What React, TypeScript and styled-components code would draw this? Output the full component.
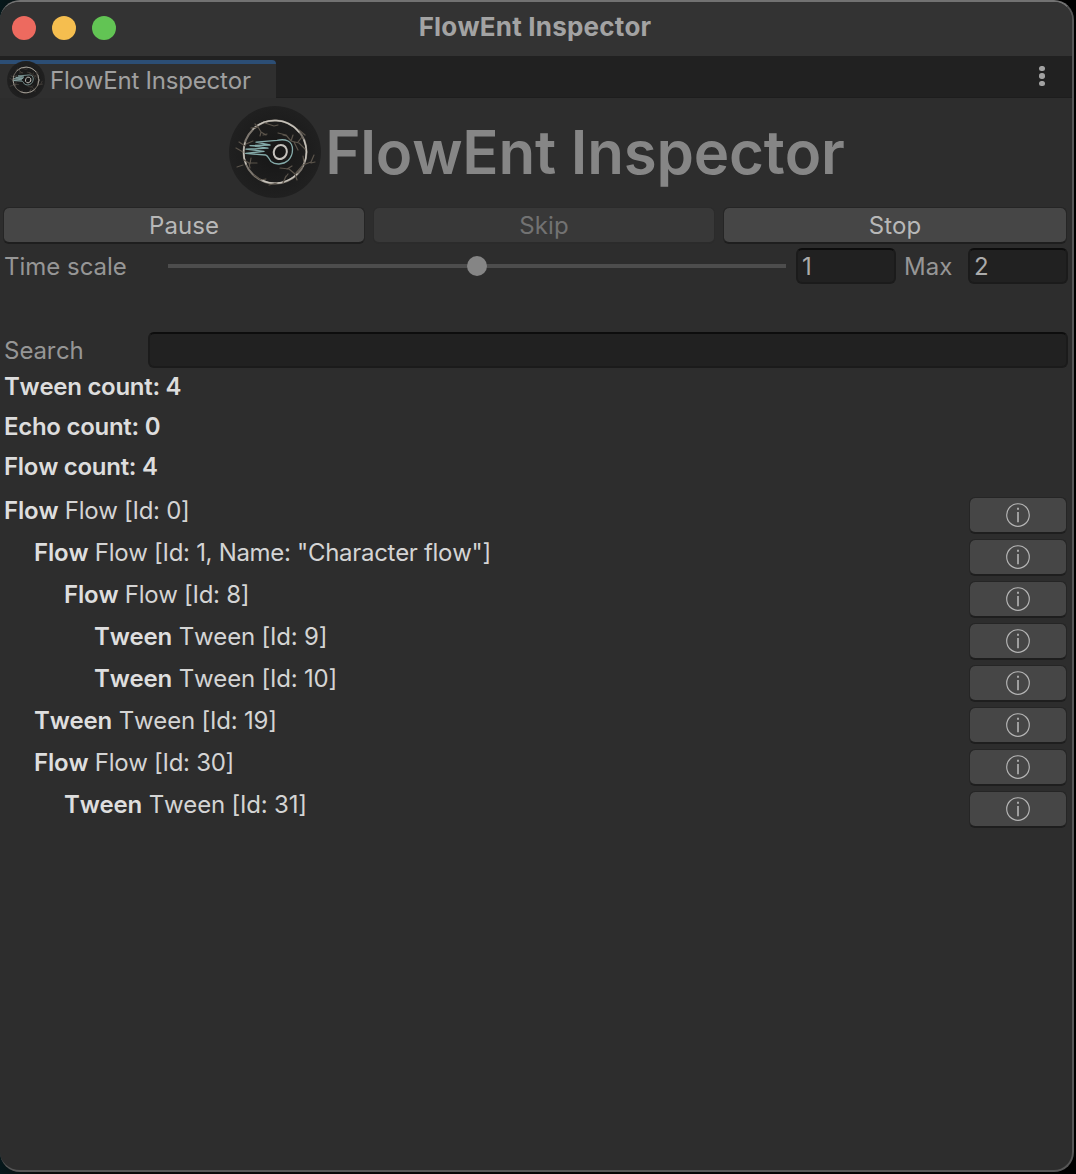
import React, { useState } from "react";
import styled, { createGlobalStyle } from "styled-components";

const GlobalStyle = createGlobalStyle`
  * { box-sizing: border-box; }
  body {
    margin: 0;
    background: #0b0c0c;
    font-family: Inter, "Liberation Sans", sans-serif;
    font-size: 24px;
    font-kerning: none;
    color: #9c9c9c;
    overflow: hidden;
  }
`;

const Desktop = styled.div`
  width: 1076px;
  height: 1174px;
  background: linear-gradient(90deg, #06181b 0, #0b0b0b 40px, #000 1070px);
`;

const Window = styled.main`
  width: 1074px;
  height: 1172px;
  display: flex;
  flex-direction: column;
  background: #2d2d2d;
  border: 2px solid #565656;
  border-top-color: #727272;
  border-left: 0;
  border-radius: 20px;
  overflow: hidden;
`;

const TitleBar = styled.header`
  flex: 0 0 54px;
  display: grid;
  grid-template-columns: 1fr auto 1fr;
  align-items: center;
  padding: 0 14px 4px 12px;
  background: #333333;
`;

const Lights = styled.div`
  display: flex;
  gap: 16px;
  padding-top: 2px;
`;

const Light = styled.span<{ $color: string }>`
  width: 24px;
  height: 24px;
  border-radius: 50%;
  background: ${(p) => p.$color};
`;

const WindowTitle = styled.div`
  font-size: 26px;
  font-weight: 700;
  line-height: 50px;
  letter-spacing: 0.2px;
  color: #a3a3a3;
`;

const TabBar = styled.nav`
  flex: 0 0 42px;
  display: flex;
  justify-content: space-between;
  padding-top: 4px;
  background: #212121;
  box-shadow: inset 0 -1px #1d1d1d;
`;

const Tab = styled.div`
  width: 276px;
  height: 38px;
  display: flex;
  align-items: center;
  gap: 5px;
  padding-left: 7px;
  background: #2f2f2f;
  border-top: 4px solid #2c4e75;
  border-top-right-radius: 4px;
`;

const TabLogo = styled.span`
  display: flex;
  margin-top: -3px;
`;

const TabLabel = styled.span`
  line-height: 32px;
  letter-spacing: -0.2px;
  white-space: nowrap;
  color: #a0a0a0;
`;

const MenuButton = styled.button`
  width: 24px;
  margin-right: 18px;
  padding: 1px 0 7px;
  display: flex;
  flex-direction: column;
  align-items: center;
  justify-content: center;
  gap: 2.1px;
  background: none;
  border: 0;
`;

const Dot = styled.i`
  width: 5.4px;
  height: 5.4px;
  border-radius: 50%;
  background: #a2a2a2;
`;

const Hero = styled.section`
  flex: 0 0 109px;
  display: flex;
  justify-content: center;
  align-items: center;
  gap: 4px;
  padding: 0 0 2px 2px;
`;

const HeroTitle = styled.h1`
  margin: 0;
  font-size: 60px;
  font-weight: 600;
  line-height: 104px;
  letter-spacing: -0.2px;
  color: #868686;
`;

const Controls = styled.div`
  display: grid;
  grid-template-columns: 362px 342px 344px;
  gap: 8px;
  padding-left: 3px;
`;

const Button = styled.button`
  height: 37px;
  padding: 0;
  display: flex;
  align-items: center;
  justify-content: center;
  font: inherit;
  font-kerning: none;
  letter-spacing: 0.05px;
  color: #b8b8b8;
  background: #464646;
  background-clip: padding-box;
  border: 1.5px solid #252525;
  border-bottom: 2px solid #1e1e1e;
  border-radius: 6px;
  &:disabled {
    color: #727272;
    background: #383838;
    border-color: #2b2b2b;
  }
`;

const InfoButton = styled(Button)`
  width: 98px;
`;

const Row = styled.div<{ $top: number }>`
  height: 36px;
  display: flex;
  align-items: center;
  margin-top: ${(p) => p.$top}px;
  padding: 0 4px;
`;

const FieldLabel = styled.label<{ $width: number; $indent?: number }>`
  width: ${(p) => p.$width}px;
  padding: 2px 0 0 ${(p) => p.$indent ?? 0}px;
  flex: none;
  line-height: 36px;
  letter-spacing: 0;
  color: #969696;
`;

const Field = styled.input<{ $width: number }>`
  width: ${(p) => p.$width}px;
  height: 36px;
  padding: 0 5px 0 4px;
  font: inherit;
  color: #ababab;
  background: #212121;
  border: 2px solid #1b1b1b;
  border-top-color: #0d0d0d;
  border-radius: 6px;
  outline: none;
`;

const Slider = styled.input`
  appearance: none;
  width: 618px;
  height: 20px;
  margin: 0 10px 0 0;
  background: linear-gradient(#4d4d4d, #4d4d4d) center / 100% 4px no-repeat;
  &::-webkit-slider-thumb {
    appearance: none;
    width: 20px;
    height: 20px;
    border-radius: 50%;
    background: #858585;
  }
`;

const Counts = styled.section`
  padding: 0 4px;
  margin-top: -1px;
  margin-bottom: 10px;
`;

const Count = styled.div`
  font-weight: 600;
  line-height: 40px;
  letter-spacing: -0.28px;
  color: #dddddd;
`;

const Tree = styled.ul`
  margin: 0;
  padding: 0 5px 0 4px;
  list-style: none;
`;

const Node = styled.li<{ $depth: number }>`
  height: 42px;
  display: flex;
  justify-content: space-between;
  align-items: flex-start;
  padding-left: ${(p) => p.$depth * 30}px;
`;

const NodeText = styled.span<{ $spacing: number }>`
  line-height: 28px;
  letter-spacing: ${(p) => p.$spacing}px;
  color: #d4d4d4;
  white-space: pre;
`;

const Kind = styled.strong`
  font-weight: 600;
  letter-spacing: -0.2px;
  color: #dedede;
`;

const Logo = ({ size }: { size: number }) => (
  <svg width={size} height={size} viewBox="0 0 92 92" fill="none" strokeLinecap="round" strokeLinejoin="round">
    <defs>
      <radialGradient id={`disc${size}`}>
        <stop offset="0" stopColor="#161616" />
        <stop offset="1" stopColor="#202020" />
      </radialGradient>
    </defs>
    <circle cx="46" cy="46" r="46" fill={`url(#disc${size})`} />
    <circle cx="46" cy="46" r="31.5" stroke="#7d776f" strokeWidth="2" />
    <path d="M24 23a31.5 31.5 0 0 1 46 3M75 34a31.5 31.5 0 0 1-1 26M68 68a31.5 31.5 0 0 1-36 6M17 58a31.5 31.5 0 0 1-1-21" stroke="#c5c1b9" strokeWidth="1.5" />
    <g stroke="#5b544b" strokeWidth="1.2">
      <path d="M22 22l7-1 3 5 5 3M29 21l-3-3M32 26l-1 4M36 17l9 3 4-1M34 29l4-1" />
      <path d="M49 27l8 2 5 6 8 2 6 6M62 35l2-6M58 30l-4-1M69 36l4-5M65 36l4 8" />
      <path d="M16 40l-6-4M14 46l-7-4M17 38l7-3M15 54l5 3 8 0M20 57l1 5M22 52l-1 6M14 59l-6 2" />
      <path d="M51 62l9 1 6 5 2 6M58 63l5-3M67 67l7-8 8-3 3-7M75 57l-1-7M82 57l4-1M54 77l3-7M56 72l3-4" />
      <path d="M70 24l6 5M25 69l7 5 5-1M40 79l8-2" />
    </g>
    <path
      d="M16.7 47.4L36.7 49C39 49.4 40 53 42 55.500C46 59 54 59 59 54.500C65 48.500 65 38 59 35C56 33.500 52 33.500 48 34.300L27 36.200L41 39L21 39.600L39 42.200L17 43.200L35 45.400Z"
      stroke={size < 60 ? "#8aa9a8" : "#84aaa9"}
      strokeWidth={size < 60 ? 2 : 1.3}
    />
    <ellipse cx="51.3" cy="46" rx="6.4" ry="7.2" transform="rotate(25 51.3 46)" stroke="#c4c1bc" strokeWidth="2" />
  </svg>
);

const InfoIcon = () => (
  <svg width="24" height="24" viewBox="0 0 24 24" fill="none" stroke="#b5b5b5">
    <circle cx="12" cy="12" r="11.3" strokeWidth="1.15" />
    <path d="M12 9v10.2" strokeWidth="1.6" />
    <path d="M12 4.8v2" strokeWidth="1.8" />
  </svg>
);

const nodes = [
  { depth: 0, kind: "Flow", label: "Flow [Id: 0]" },
  { depth: 1, kind: "Flow", label: 'Flow [Id: 1, Name: "Character flow"]' },
  { depth: 2, kind: "Flow", label: "Flow [Id: 8]" },
  { depth: 3, kind: "Tween", label: "Tween [Id: 9]" },
  { depth: 3, kind: "Tween", label: "Tween [Id: 10]" },
  { depth: 1, kind: "Tween", label: "Tween [Id: 19]" },
  { depth: 1, kind: "Flow", label: "Flow [Id: 30]" },
  { depth: 2, kind: "Tween", label: "Tween [Id: 31]" },
];

export default function App() {
  const [scale, setScale] = useState("1");
  const [max, setMax] = useState("2");
  const [search, setSearch] = useState("");

  return (
    <Desktop>
      <GlobalStyle />
      <Window>
        <TitleBar>
          <Lights>
            <Light $color="#ed6a5f" />
            <Light $color="#f5be4f" />
            <Light $color="#62c454" />
          </Lights>
          <WindowTitle>FlowEnt Inspector</WindowTitle>
        </TitleBar>
        <TabBar>
          <Tab>
            <TabLogo><Logo size={38} /></TabLogo>
            <TabLabel>FlowEnt Inspector</TabLabel>
          </Tab>
          <MenuButton aria-label="Menu"><Dot /><Dot /><Dot /></MenuButton>
        </TabBar>
        <Hero>
          <Logo size={92} />
          <HeroTitle>FlowEnt Inspector</HeroTitle>
        </Hero>
        <Controls>
          <Button>Pause</Button>
          <Button disabled>Skip</Button>
          <Button>Stop</Button>
        </Controls>
        <Row $top={4}>
          <FieldLabel $width={164}>Time scale</FieldLabel>
          <Slider type="range" min="0" max={max} step="0.01" value={scale} onChange={(e) => setScale(e.target.value)} />
          <Field $width={100} value={scale} onChange={(e) => setScale(e.target.value)} />
          <FieldLabel $width={72} $indent={8}>Max</FieldLabel>
          <Field $width={100} value={max} onChange={(e) => setMax(e.target.value)} />
        </Row>
        <Row $top={48}>
          <FieldLabel $width={144}>Search</FieldLabel>
          <Field $width={920} value={search} onChange={(e) => setSearch(e.target.value)} />
        </Row>
        <Counts>
          <Count>Tween count: 4</Count>
          <Count>Echo count: 0</Count>
          <Count>Flow count: 4</Count>
        </Counts>
        <Tree>
          {nodes.map((n, i) => (
            <Node key={i} $depth={n.depth}>
              <NodeText $spacing={n.kind === "Flow" ? -0.3 : -0.2}>
                <Kind>{n.kind}</Kind> {n.label}
              </NodeText>
              <InfoButton aria-label="Info"><InfoIcon /></InfoButton>
            </Node>
          ))}
        </Tree>
      </Window>
    </Desktop>
  );
}
